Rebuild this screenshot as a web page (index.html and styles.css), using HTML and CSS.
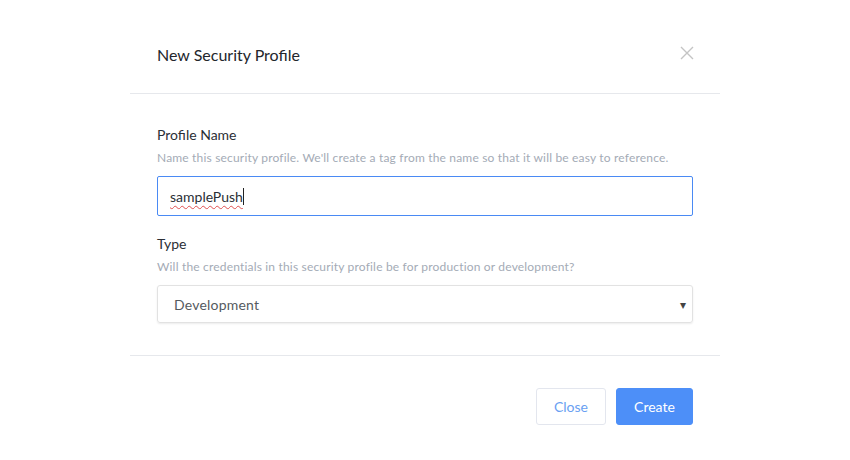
FILE: index.html
```html
<!DOCTYPE html>
<html>
<head>
<meta charset="utf-8">
<link rel="stylesheet" href="styles.css">
</head>
<body>
<div class="modal">
  <div class="modal-header">
    <h3 class="title">New Security Profile</h3>
    <span class="close-x">
      <svg width="14" height="14" viewBox="0 0 14 14"><path d="M1 1L13 13M13 1L1 13" stroke="#c4c4c4" stroke-width="1.4" fill="none"/></svg>
    </span>
  </div>
  <div class="modal-body">
    <div class="field">
      <label class="label">Profile Name</label>
      <p class="hint">Name this security profile. We'll create a tag from the name so that it will be easy to reference.</p>
      <div class="input focused"><span class="typed">samplePush</span><span class="caret"></span></div>
    </div>
    <div class="field">
      <label class="label">Type</label>
      <p class="hint">Will the credentials in this security profile be for production or development?</p>
      <div class="select"><span>Development</span><span class="arrow">▾</span></div>
    </div>
  </div>
  <div class="modal-footer">
    <button class="btn btn-close">Close</button>
    <button class="btn btn-create">Create</button>
  </div>
</div>
</body>
</html>
```
FILE: styles.css
```css
html, body { margin: 0; padding: 0; background: #fff; }
body { font-family: Lato, "Open Sans", sans-serif; color: #2b2f36; }
.modal { width: 590px; margin-left: 130px; }
.modal-header {
  height: 94px; border-bottom: 1px solid #e6e8ec;
  display: flex; align-items: center; justify-content: space-between;
  padding: 16px 26px 0 27px; box-sizing: border-box;
}
.title { margin: 0; font-size: 16px; font-weight: 400; color: #23262c; }
.close-x { display: flex; margin-top: -4px; }
.modal-body { padding: 32px 27px 32px 27px; border-bottom: 1px solid #e6e8ec; }
.field { margin-bottom: 19px; }
.field:last-child { margin-bottom: 0; }
.label { display: block; font-size: 14px; color: #2b2f36; line-height: 18px; }
.hint { margin: 6px 0 10px; font-size: 12px; letter-spacing: 0.18px; color: #a4abb6; line-height: 16px; }
.input {
  height: 40px; box-sizing: border-box; border: 1px solid #4a8af4; border-radius: 2px;
  display: flex; align-items: center; padding-left: 12px; font-size: 14px; color: #2b2f36;
}
.typed { text-decoration: underline wavy #e05050; text-decoration-thickness: 1px; text-underline-offset: 3px; }
.caret { width: 1px; height: 17px; background: #222; }
.select {
  height: 38px; box-sizing: border-box; border: 1px solid #e2e2e2; border-radius: 3px;
  box-shadow: 0 1px 2px rgba(0,0,0,0.08);
  display: flex; align-items: center; justify-content: space-between;
  padding: 0 6px 0 16px; font-size: 14px; color: #555a60; letter-spacing: 0.2px;
}
.arrow { font-size: 12px; color: #444; }
.modal-footer { display: flex; justify-content: flex-end; gap: 10px; padding: 32px 27px 0 0; }
.btn { height: 37px; font-family: inherit; font-size: 14px; border-radius: 3px; cursor: pointer; }
.btn-close { width: 70px; background: #fff; border: 1px solid #e3e6ee; color: #6a9ff2; }
.btn-create { width: 77px; background: #4d8ff8; border: 1px solid #4d8ff8; color: #fff; }
```
